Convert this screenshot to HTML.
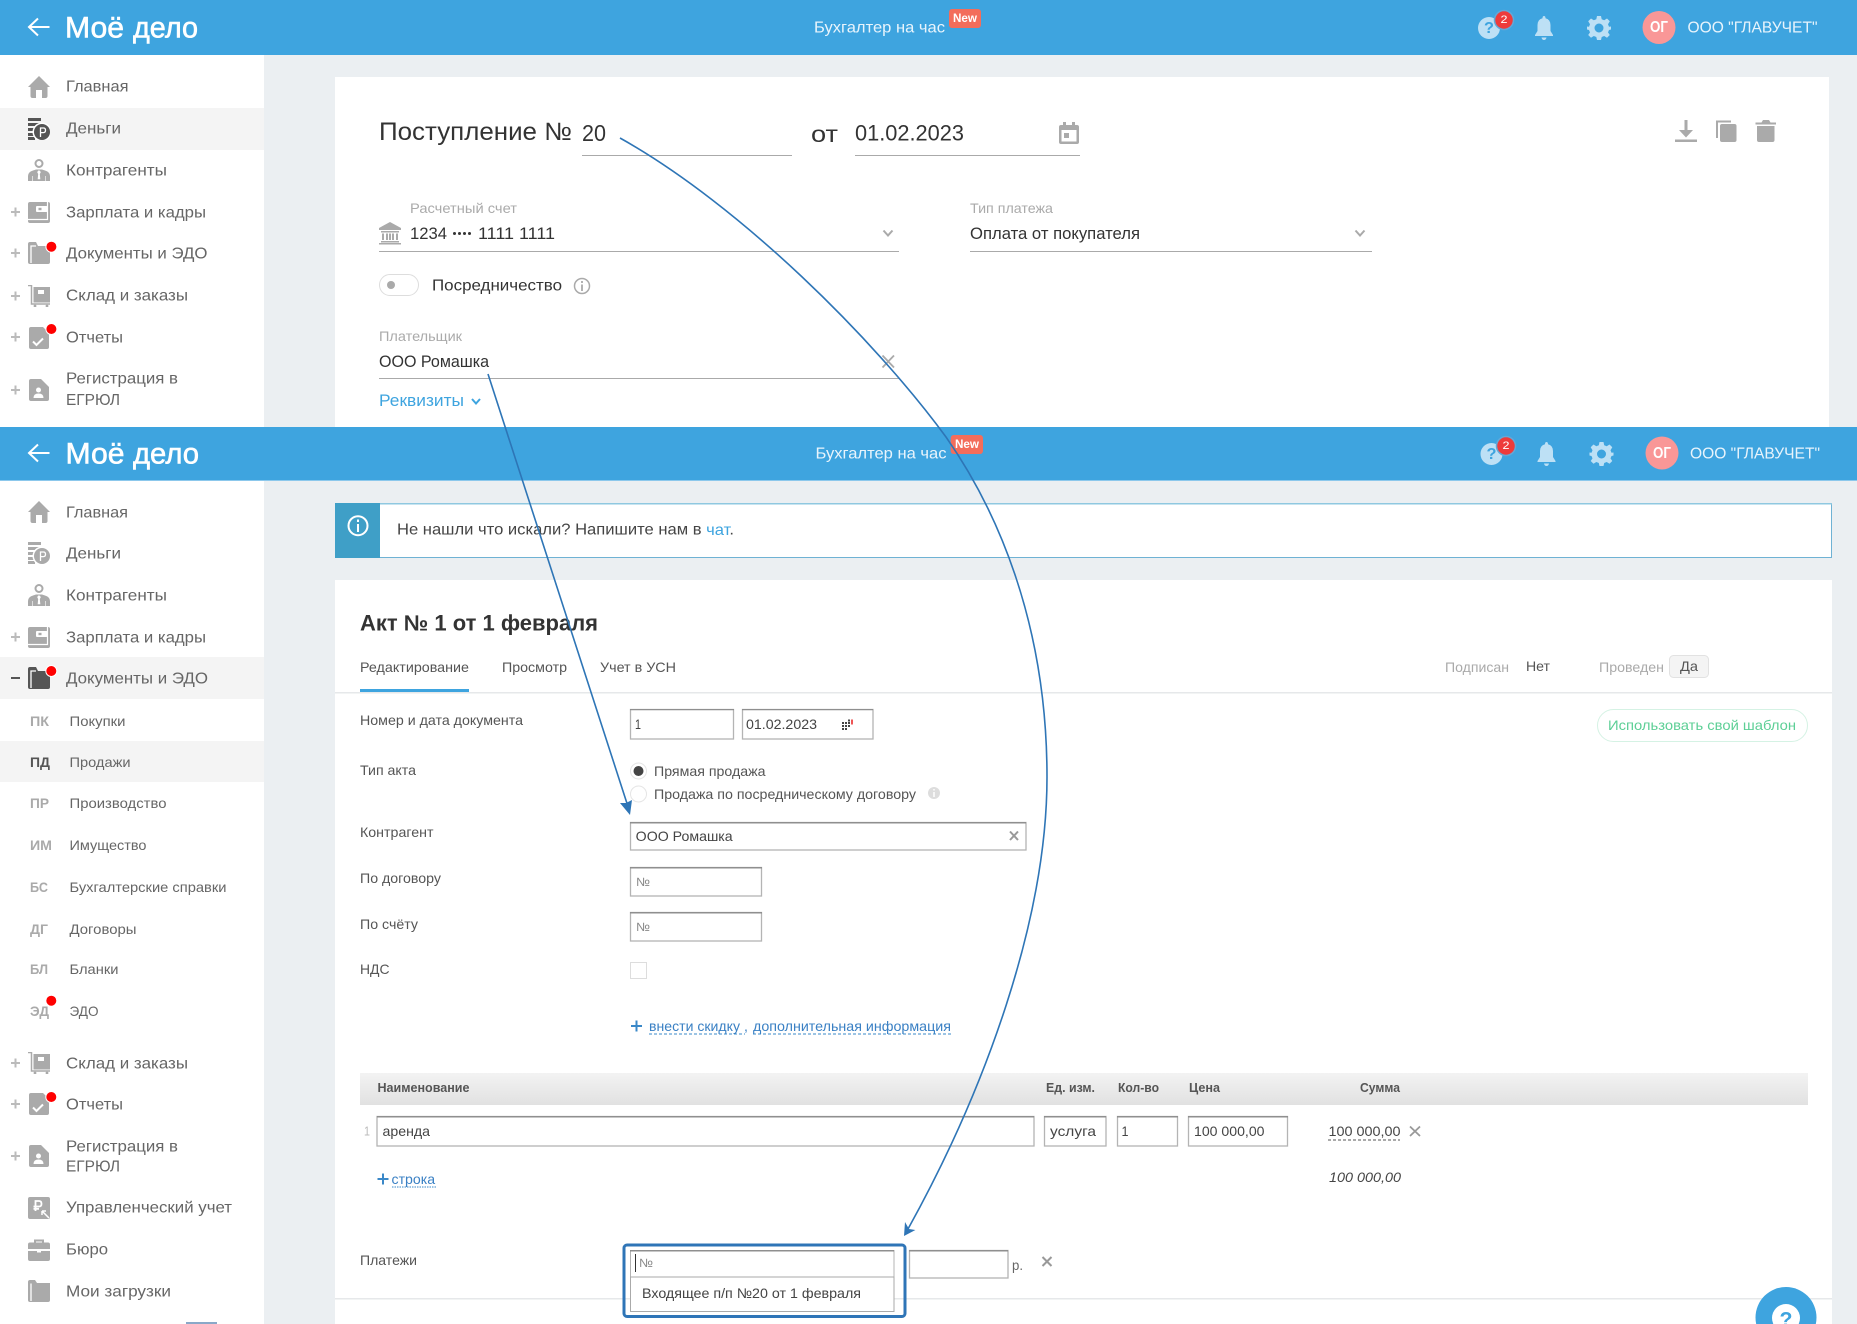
<!DOCTYPE html>
<html lang="ru"><head><meta charset="utf-8"><title>Моё дело</title>
<style>
html,body{margin:0;padding:0;width:1857px;height:1324px;overflow:hidden;background:#ebeff2}
svg{display:block}
text{font-family:"Liberation Sans","Noto Sans CJK SC",sans-serif;dominant-baseline:central;white-space:pre}
.s{font-size:16px;fill:#666}
.u{font-size:14px;fill:#666}
.a{font-size:14px;font-weight:bold;fill:#aaa}
.h{font-size:16px;fill:#e8f4fc}
.l{font-size:14px;fill:#aaa}
.v{font-size:16.5px;fill:#333}
.f{font-size:14px;fill:#555}
.th{font-size:12.5px;font-weight:bold;fill:#555}
.lg{font-size:30px;fill:#fff;stroke:#fff;stroke-width:.6px}
</style></head><body>
<svg xmlns="http://www.w3.org/2000/svg" width="1857" height="1324" viewBox="0 0 1857 1324">
<defs>
<symbol id="home" viewBox="0 0 22 22" width="22" height="22"><path d="M11 0L22 11H19.5V20Q19.5 22 17.5 22H14V14H8V22H4.500Q2.500 22 2.500 20V11H0Z"/></symbol>
<symbol id="money" viewBox="0 0 22 22" width="22" height="22"><path d="M0 0H13V3H0ZM0 5H12V8H0ZM0 10H7V13H0ZM0 15H6V18H0ZM0 19H7V22H0Z"/><circle cx="14" cy="14" r="9.500" fill="#fff"/><circle cx="14" cy="14" r="8"/><path d="M12.500 19V10H15.500Q17.500 10 17.500 12.300T15.500 14.600H12.500" fill="none" stroke="#fff" stroke-width="1.300"/></symbol>
<symbol id="person" viewBox="0 0 22 22" width="22" height="22"><circle cx="11" cy="4.500" r="3.500" fill="none" stroke="currentColor" stroke-width="2"/><path d="M0 22V17Q0 13 5 11.500L8 10.500H14L17 11.500Q22 13 22 17V22Z"/><path d="M11 11.500L9.500 13L10.500 15L10 20H12L11.500 15L12.500 13ZM4.500 17V22M17.500 17V22" fill="#fff" stroke="#fff" stroke-width=".6"/></symbol>
<symbol id="wallet" viewBox="0 0 22 22" width="22" height="22"><rect y="1" width="22" height="21" rx="2"/><path d="M19.500 1V18.500H0" fill="none" stroke="#fff" stroke-width="1.200"/><rect x="8" y="5" width="11.500" height="6" rx="1" fill="#fff"/><rect x="10.500" y="6.800" width="3" height="2.400"/></symbol>
<symbol id="folder" viewBox="0 0 22 22" width="22" height="22"><path d="M0 2Q0 0 2 0H8L10 4H22V20Q22 22 20 22H2Q0 22 0 20Z"/><path d="M3 21V4H8" fill="none" stroke="#fff" stroke-width="1.300"/></symbol>
<symbol id="cart" viewBox="0 0 22 22" width="22" height="22"><path d="M0 0.500H3.500V19H22" fill="none" stroke="currentColor" stroke-width="1.500"/><rect x="5.500" y="2" width="16.500" height="15.500"/><rect x="10" y="5" width="6" height="4" fill="#fff"/><circle cx="7" cy="21" r="1.400"/><circle cx="19" cy="21" r="1.400"/></symbol>
<symbol id="report" viewBox="0 0 22 22" width="22" height="22"><path d="M3 0H15L21 6V20Q21 22 19 22H3Q1 22 1 20V2Q1 0 3 0Z"/><path d="M5 14.500L8.500 18L15 11.500" fill="none" stroke="#fff" stroke-width="2"/></symbol>
<symbol id="reg" viewBox="0 0 22 22" width="22" height="22"><path d="M3 0H13L21 8V20Q21 22 19 22H3Q1 22 1 20V2Q1 0 3 0Z"/><circle cx="10.500" cy="11" r="2.500" fill="#fff"/><path d="M5.500 19Q5.500 14.500 10.500 14.500T15.500 19Z" fill="#fff"/></symbol>
<symbol id="manage" viewBox="0 0 22 22" width="22" height="22"><rect width="22" height="22" rx="2"/><path d="M7.500 14V4H11Q13.500 4 13.500 6.800T11 9.500H5.500M5.500 11.800H11" fill="none" stroke="#fff" stroke-width="1.800"/><path d="M21 21L14 14M14 14V18M14 14H18" fill="none" stroke="#fff" stroke-width="1.500"/></symbol>
<symbol id="case" viewBox="0 0 22 22" width="22" height="22"><path d="M7 4V1.500H15V4" fill="none" stroke="currentColor" stroke-width="2"/><path d="M0 5.500Q0 3.500 2 3.500H20Q22 3.500 22 5.500V10H0ZM0 12H22V20Q22 22 20 22H2Q0 22 0 20Z"/><rect x="9" y="10" width="4" height="3.500" fill="#fff"/></symbol>
<symbol id="folder2" viewBox="0 0 22 22" width="22" height="22"><path d="M0 2Q0 0 2 0H7L9 3H22V20Q22 22 20 22H2Q0 22 0 20Z"/><path d="M3 21V3.500" fill="none" stroke="#fff" stroke-width="1.300"/></symbol>
<symbol id="gear" viewBox="0 0 24 24" width="24" height="24"><path d="M10 0H14L14.700 3.300L17.200 4.300L20 2.500L22.800 5.300L21 8.200L22 10.700L24 10.500V13.500L22 14L21 16.400L22.800 19L20 21.800L17.200 20L14.700 21L14 24H10L9.300 21L6.800 20L4 21.800L1.200 19L3 16.400L2 14L0 13.500V10.500L2 10.700L3 8.200L1.200 5.300L4 2.500L6.800 4.300L9.300 3.300ZM12 7.500A4.500 4.500 0 1 0 12 16.500A4.500 4.500 0 1 0 12 7.500Z" fill-rule="evenodd"/></symbol>
<symbol id="bell" viewBox="0 0 20 24" width="20" height="24"><path d="M10 0Q11.500 0 11.500 2.200Q16.500 3.500 16.500 9V15L19 19V20H1V19L3.500 15V9Q3.500 3.500 8.500 2.200Q8.500 0 10 0ZM7.500 21.500H12.500Q12 24 10 24T7.500 21.500Z"/></symbol>
<linearGradient id="thg" x1="0" y1="0" x2="0" y2="1"><stop offset="0" stop-color="#f3f3f3"/><stop offset="1" stop-color="#e1e1e1"/></linearGradient>
</defs>

<rect width="1857" height="1324" fill="#ebeff2"/>
<rect x="0" y="55" width="264" height="1269" fill="#fff"/>

<!-- top sidebar -->
<rect x="0" y="108" width="264" height="42" fill="#f4f4f4"/>
<g fill="#aaa" color="#aaa">
<use href="#home" x="28" y="76"/>
<use href="#money" x="28" y="118" fill="#555" color="#555"/>
<use href="#person" x="28" y="159"/>
<use href="#wallet" x="28" y="201"/>
<use href="#folder" x="28" y="242"/>
<use href="#cart" x="28" y="285"/>
<use href="#report" x="28" y="327"/>
<use href="#reg" x="28" y="379"/>
</g>
<g stroke="#bbb" stroke-width="2" fill="none"><path d="M11 212H20M15.500 207.500V216.500M11 253H20M15.500 248.500V257.500M11 296H20M15.500 291.500V300.500M11 337H20M15.500 332.500V341.500M11 390H20M15.500 385.500V394.500"/></g>
<g fill="#f00" stroke="#fff" stroke-width="1"><circle cx="51.400" cy="246.700" r="5.500"/><circle cx="51.400" cy="329" r="5.500"/></g>
<text class="s" x="66" y="87" textLength="62.500" lengthAdjust="spacingAndGlyphs">Главная</text>
<text class="s" x="66" y="129" textLength="55" lengthAdjust="spacingAndGlyphs">Деньги</text>
<text class="s" x="66" y="171" textLength="101" lengthAdjust="spacingAndGlyphs">Контрагенты</text>
<text class="s" x="66" y="213" textLength="140" lengthAdjust="spacingAndGlyphs">Зарплата и кадры</text>
<text class="s" x="66" y="254" textLength="141.500" lengthAdjust="spacingAndGlyphs">Документы и ЭДО</text>
<text class="s" x="66" y="296" textLength="122" lengthAdjust="spacingAndGlyphs">Склад и заказы</text>
<text class="s" x="66" y="338" textLength="57" lengthAdjust="spacingAndGlyphs">Отчеты</text>
<text class="s" x="66" y="379" textLength="112" lengthAdjust="spacingAndGlyphs">Регистрация в</text>
<text class="s" x="66" y="400.500" textLength="54" lengthAdjust="spacingAndGlyphs">ЕГРЮЛ</text>

<!-- top card -->
<rect x="335" y="77" width="1494" height="350" fill="#fff"/>
<text x="379" y="132" font-size="25" fill="#333" textLength="193" lengthAdjust="spacingAndGlyphs">Поступление №</text>
<text x="582" y="133" font-size="23" fill="#333" textLength="24" lengthAdjust="spacingAndGlyphs">20</text>
<rect x="582" y="155" width="210" height="1" fill="#aaa"/>
<text x="811" y="134" font-size="23" fill="#333" textLength="27" lengthAdjust="spacingAndGlyphs">от</text>
<text x="855" y="133" font-size="22" fill="#333" textLength="109" lengthAdjust="spacingAndGlyphs">01.02.2023</text>
<rect x="855" y="155" width="225" height="1" fill="#aaa"/>
<path d="M1059 127Q1059 125 1061 125H1063V122H1066V125H1072V122H1075V125H1077Q1079 125 1079 127V142Q1079 144 1077 144H1061Q1059 144 1059 142ZM1061.500 130V141.500H1076.500V130ZM1064 133H1069V138H1064Z" fill="#aaa" fill-rule="evenodd"/>
<g fill="#aaa">
<path d="M1684.500 120H1687.500V130H1693L1686 137.500L1679 130H1684.500ZM1675 139.500H1697V142H1675Z"/>
<path d="M1716 138V120.500H1731V122.500H1718V138Z"/><rect x="1720" y="124" width="16.500" height="18" rx="2"/>
<path d="M1755.500 122.500H1761.500L1763 120H1769L1770.500 122.500H1776V124.500H1755.500ZM1757 126H1774.500V140Q1774.500 142 1772.500 142H1759Q1757 142 1757 140Z"/>
</g>
<text class="l" x="410" y="208" textLength="107" lengthAdjust="spacingAndGlyphs">Расчетный счет</text>
<path d="M390 222L401 228V230H379V228ZM381 231H399V232.500H381ZM382 233.500H384V240H382ZM386 233.500H388V240H386ZM392 233.500H394V240H392ZM396 233.500H398V240H396ZM389 233.500H391V240H389ZM381 241H399V242.500H381ZM379 243H401V244.500H379Z" fill="#aaa"/>
<text class="v" x="410" y="234" textLength="37" lengthAdjust="spacingAndGlyphs">1234</text>
<g fill="#333"><circle cx="454.500" cy="233.500" r="1.500"/><circle cx="459.500" cy="233.500" r="1.500"/><circle cx="464.500" cy="233.500" r="1.500"/><circle cx="469.500" cy="233.500" r="1.500"/></g>
<text class="v" x="478" y="234" textLength="77" lengthAdjust="spacingAndGlyphs">1111 1111</text>
<rect x="379" y="251" width="520" height="1" fill="#aaa"/>
<path d="M883.500 230.500L888 235.500L892.500 230.500" fill="none" stroke="#aaa" stroke-width="2"/>
<text class="l" x="970" y="208" textLength="83" lengthAdjust="spacingAndGlyphs">Тип платежа</text>
<text class="v" x="970" y="234" textLength="170" lengthAdjust="spacingAndGlyphs">Оплата от покупателя</text>
<rect x="970" y="251" width="402" height="1" fill="#aaa"/>
<path d="M1355.500 230.500L1360 235.500L1364.500 230.500" fill="none" stroke="#aaa" stroke-width="2"/>
<rect x="379.500" y="274.500" width="39" height="21" rx="10.500" fill="#fff" stroke="#ddd"/>
<circle cx="391" cy="285" r="4" fill="#aaa"/>
<text class="s" x="432" y="286" textLength="130" lengthAdjust="spacingAndGlyphs" style="fill:#333">Посредничество</text>
<circle cx="582" cy="286" r="7.500" fill="none" stroke="#aaa" stroke-width="1.500"/>
<path d="M582 284.500V291M582 281V283" stroke="#aaa" stroke-width="1.800"/>
<text class="l" x="379" y="336" textLength="83" lengthAdjust="spacingAndGlyphs">Плательщик</text>
<text class="v" x="379" y="362" textLength="110" lengthAdjust="spacingAndGlyphs">ООО Ромашка</text>
<rect x="379" y="378" width="520" height="1" fill="#aaa"/>
<path d="M882.500 355.500L894 367.500M894 355.500L882.500 367.500" stroke="#aaa" stroke-width="1.800"/>
<text class="v" x="379" y="401" textLength="85" lengthAdjust="spacingAndGlyphs" style="fill:#3ea4df">Реквизиты</text>
<path d="M472 399L476 403.500L480 399" fill="none" stroke="#3ea4df" stroke-width="2"/>

<!-- header 1 -->
<rect x="0" y="0" width="1857" height="55" fill="#3ea4df"/>
<path d="M49.500 27H29.500M38 18.500L29 27L38 35.500" fill="none" stroke="#fff" stroke-width="2"/>
<text class="lg" x="65" y="28" textLength="59" lengthAdjust="spacingAndGlyphs">Моё</text>
<text class="lg" x="133" y="28" textLength="65" lengthAdjust="spacingAndGlyphs">дело</text>
<text class="h" x="814" y="28" textLength="131" lengthAdjust="spacingAndGlyphs">Бухгалтер на час</text>
<rect x="949" y="9" width="32" height="19" rx="3" fill="#f36d5b"/>
<text x="953" y="18" font-size="12" font-weight="bold" fill="#fff" textLength="24" lengthAdjust="spacingAndGlyphs">New</text>
<circle cx="1489" cy="28" r="11" fill="#bde0f5"/>
<text x="1484" y="28.500" font-size="16" font-weight="bold" fill="#3ea4df" textLength="10" lengthAdjust="spacingAndGlyphs">?</text>
<circle cx="1504" cy="20" r="9.500" fill="#ee3b3b" stroke="#62a8d8" stroke-width="1.500"/>
<text x="1500.500" y="20" font-size="11" fill="#fff" textLength="7" lengthAdjust="spacingAndGlyphs">2</text>
<use href="#bell" x="1534" y="16" fill="#bde0f5"/>
<use href="#gear" x="1587" y="16" fill="#bde0f5"/>
<circle cx="1659" cy="27.500" r="16.500" fill="#f99797"/>
<text x="1650" y="27.500" font-size="16" font-weight="bold" fill="#fff" textLength="18" lengthAdjust="spacingAndGlyphs">ОГ</text>
<text class="h" x="1687.500" y="28" textLength="130" lengthAdjust="spacingAndGlyphs">ООО "ГЛАВУЧЕТ"</text>

<!-- header 2 -->
<rect x="0" y="427" width="1857" height="53" fill="#3ea4df"/>
<rect x="0" y="480" width="1857" height="1" fill="#8cc8ec"/>
<path d="M49.500 453H29.500M38 444.500L29 453L38 461.500" fill="none" stroke="#fff" stroke-width="2"/>
<text class="lg" x="65.500" y="454" textLength="59" lengthAdjust="spacingAndGlyphs">Моё</text>
<text class="lg" x="133" y="454" textLength="66" lengthAdjust="spacingAndGlyphs">дело</text>
<text class="h" x="815.500" y="454" textLength="131" lengthAdjust="spacingAndGlyphs">Бухгалтер на час</text>
<rect x="950.700" y="435" width="32.300" height="19" rx="3" fill="#f36d5b"/>
<text x="955" y="444" font-size="12" font-weight="bold" fill="#fff" textLength="24" lengthAdjust="spacingAndGlyphs">New</text>
<circle cx="1491.500" cy="454" r="11" fill="#bde0f5"/>
<text x="1486.500" y="454.500" font-size="16" font-weight="bold" fill="#3ea4df" textLength="10" lengthAdjust="spacingAndGlyphs">?</text>
<circle cx="1506" cy="446" r="9.500" fill="#ee3b3b" stroke="#62a8d8" stroke-width="1.500"/>
<text x="1502.500" y="446" font-size="11" fill="#fff" textLength="7" lengthAdjust="spacingAndGlyphs">2</text>
<use href="#bell" x="1536.500" y="442" fill="#bde0f5"/>
<use href="#gear" x="1589.500" y="442" fill="#bde0f5"/>
<circle cx="1662" cy="453" r="16.500" fill="#f99797"/>
<text x="1653" y="453.500" font-size="16" font-weight="bold" fill="#fff" textLength="18" lengthAdjust="spacingAndGlyphs">ОГ</text>
<text class="h" x="1690" y="454" textLength="130" lengthAdjust="spacingAndGlyphs">ООО "ГЛАВУЧЕТ"</text>

<!-- sidebar 2 -->
<rect x="0" y="657" width="264" height="42" fill="#f4f4f4"/>
<rect x="0" y="741" width="264" height="41" fill="#f4f4f4"/>
<g fill="#aaa" color="#aaa">
<use href="#home" x="28" y="501"/>
<use href="#money" x="28" y="542"/>
<use href="#person" x="28" y="584"/>
<use href="#wallet" x="28" y="626"/>
<use href="#folder" x="28" y="667" fill="#555" color="#555"/>
<use href="#cart" x="28" y="1052"/>
<use href="#report" x="28" y="1093"/>
<use href="#reg" x="28" y="1145"/>
<use href="#manage" x="28" y="1197"/>
<use href="#case" x="28" y="1239"/>
<use href="#folder2" x="28" y="1280"/>
</g>
<g stroke="#bbb" stroke-width="2" fill="none"><path d="M11 637H20M15.500 632.500V641.500M11 1063H20M15.500 1058.500V1067.500M11 1104H20M15.500 1099.500V1108.500M11 1156H20M15.500 1151.500V1160.500"/></g>
<path d="M11 678H20" stroke="#555" stroke-width="2"/>
<g fill="#f00" stroke="#fff" stroke-width="1"><circle cx="51.300" cy="671" r="5.500"/><circle cx="51.300" cy="1000.700" r="5.500"/><circle cx="51.300" cy="1097" r="5.500"/></g>
<text class="s" x="66" y="513" textLength="62" lengthAdjust="spacingAndGlyphs">Главная</text>
<text class="s" x="66" y="554" textLength="55" lengthAdjust="spacingAndGlyphs">Деньги</text>
<text class="s" x="66" y="596" textLength="101" lengthAdjust="spacingAndGlyphs">Контрагенты</text>
<text class="s" x="66" y="638" textLength="140" lengthAdjust="spacingAndGlyphs">Зарплата и кадры</text>
<text class="s" x="66" y="679" textLength="142" lengthAdjust="spacingAndGlyphs">Документы и ЭДО</text>
<text class="a" x="30" y="721" textLength="19" lengthAdjust="spacingAndGlyphs">ПК</text><text class="u" x="69.500" y="721" textLength="56" lengthAdjust="spacingAndGlyphs">Покупки</text>
<text class="a" x="30" y="762" textLength="20" lengthAdjust="spacingAndGlyphs" style="fill:#555">ПД</text><text class="u" x="69.500" y="762" textLength="61" lengthAdjust="spacingAndGlyphs">Продажи</text>
<text class="a" x="30" y="803" textLength="19" lengthAdjust="spacingAndGlyphs">ПР</text><text class="u" x="69.500" y="803" textLength="97" lengthAdjust="spacingAndGlyphs">Производство</text>
<text class="a" x="30" y="845" textLength="22" lengthAdjust="spacingAndGlyphs">ИМ</text><text class="u" x="69.500" y="845" textLength="77" lengthAdjust="spacingAndGlyphs">Имущество</text>
<text class="a" x="30" y="887" textLength="18" lengthAdjust="spacingAndGlyphs">БС</text><text class="u" x="69.500" y="887" textLength="157" lengthAdjust="spacingAndGlyphs">Бухгалтерские справки</text>
<text class="a" x="30" y="929" textLength="18" lengthAdjust="spacingAndGlyphs">ДГ</text><text class="u" x="69.500" y="929" textLength="67" lengthAdjust="spacingAndGlyphs">Договоры</text>
<text class="a" x="30" y="969" textLength="18" lengthAdjust="spacingAndGlyphs">БЛ</text><text class="u" x="69.500" y="969" textLength="49" lengthAdjust="spacingAndGlyphs">Бланки</text>
<text class="a" x="30" y="1011" textLength="19" lengthAdjust="spacingAndGlyphs">ЭД</text><text class="u" x="69.500" y="1011" textLength="29" lengthAdjust="spacingAndGlyphs">ЭДО</text>
<text class="s" x="66" y="1064" textLength="122" lengthAdjust="spacingAndGlyphs">Склад и заказы</text>
<text class="s" x="66" y="1105" textLength="57" lengthAdjust="spacingAndGlyphs">Отчеты</text>
<text class="s" x="66" y="1147" textLength="112" lengthAdjust="spacingAndGlyphs">Регистрация в</text>
<text class="s" x="66" y="1167" textLength="54" lengthAdjust="spacingAndGlyphs">ЕГРЮЛ</text>
<text class="s" x="66" y="1208" textLength="166" lengthAdjust="spacingAndGlyphs">Управленческий учет</text>
<text class="s" x="66" y="1250" textLength="42" lengthAdjust="spacingAndGlyphs">Бюро</text>
<text class="s" x="66" y="1292" textLength="105" lengthAdjust="spacingAndGlyphs">Мои загрузки</text>
<rect x="186" y="1322" width="31" height="2" fill="#8aa8c8"/>

<!-- notice -->
<rect x="335.500" y="503.500" width="1496" height="54" fill="#fff" stroke="#6fb2d4"/>
<rect x="335" y="503" width="1497" height="1.500" fill="#8fc8e0"/>
<rect x="335" y="503" width="45" height="55" fill="#3f9fc7"/>
<circle cx="358" cy="525.700" r="9.500" fill="none" stroke="#fff" stroke-width="2"/>
<path d="M358 524V532M358 519.500V522" stroke="#fff" stroke-width="2"/>
<text x="397" y="530" font-size="16" fill="#444" textLength="337" lengthAdjust="spacingAndGlyphs">Не нашли что искали? Напишите нам в <tspan fill="#3ea4df">чат</tspan>.</text>

<!-- main card -->
<rect x="335" y="580" width="1497" height="744" fill="#fff"/>
<text x="360" y="623" font-size="22" font-weight="bold" fill="#333" textLength="238" lengthAdjust="spacingAndGlyphs">Акт № 1 от 1 февраля</text>
<text class="f" x="360" y="667" textLength="109" lengthAdjust="spacingAndGlyphs">Редактирование</text>
<text class="f" x="502" y="667" textLength="65" lengthAdjust="spacingAndGlyphs">Просмотр</text>
<text class="f" x="600" y="667" textLength="76" lengthAdjust="spacingAndGlyphs">Учет в УСН</text>
<rect x="335" y="692" width="1497" height="1.500" fill="#e6e8ea"/>
<rect x="360" y="689" width="109" height="3" fill="#3ea4df"/>
<text class="l" x="1445" y="667" textLength="64" lengthAdjust="spacingAndGlyphs">Подписан</text>
<text class="f" x="1526" y="666" textLength="24" lengthAdjust="spacingAndGlyphs">Нет</text>
<text class="l" x="1599" y="667" textLength="65" lengthAdjust="spacingAndGlyphs">Проведен</text>
<rect x="1669.500" y="655.500" width="39" height="22" rx="4" fill="#f4f4f4" stroke="#e2e2e2"/>
<text class="f" x="1680" y="666" textLength="18" lengthAdjust="spacingAndGlyphs">Да</text>
<rect x="1597.500" y="709.500" width="210" height="32" rx="16" fill="#fff" stroke="#d5f2e4"/>
<text x="1608" y="725" font-size="14" fill="#5dcf96" textLength="188" lengthAdjust="spacingAndGlyphs">Использовать свой шаблон</text>

<text class="f" x="360" y="720" textLength="163" lengthAdjust="spacingAndGlyphs">Номер и дата документа</text>
<text class="f" x="360" y="770" textLength="56" lengthAdjust="spacingAndGlyphs">Тип акта</text>
<text class="f" x="360" y="832" textLength="73.500" lengthAdjust="spacingAndGlyphs">Контрагент</text>
<text class="f" x="360" y="878" textLength="81" lengthAdjust="spacingAndGlyphs">По договору</text>
<text class="f" x="360" y="924" textLength="58" lengthAdjust="spacingAndGlyphs">По счёту</text>
<text class="f" x="360" y="969" textLength="29.500" lengthAdjust="spacingAndGlyphs">НДС</text>

<g fill="#fff" stroke="#b4b4b4" stroke-width="1.300">
<rect x="630.500" y="709.500" width="103" height="29.500"/>
<rect x="742.500" y="709.500" width="130.500" height="29.500"/>
<rect x="630.500" y="822.500" width="395.500" height="27.500"/>
<rect x="630.500" y="867.500" width="131" height="28.500"/>
<rect x="630.500" y="912.500" width="131" height="28.500"/>
<rect x="377" y="1116.500" width="657" height="29.500"/>
<rect x="1044.500" y="1116.500" width="61.500" height="29.500"/>
<rect x="1117.500" y="1116.500" width="60" height="29.500"/>
<rect x="1188.500" y="1116.500" width="99" height="29.500"/>
<rect x="909.500" y="1250.500" width="98.500" height="27.500"/>
</g>
<g fill="#8f8f8f">
<rect x="630" y="709" width="104" height="1.200"/><rect x="742" y="709" width="131" height="1.200"/>
<rect x="630" y="822" width="396" height="1.500"/><rect x="630" y="867" width="132" height="1.500"/>
<rect x="630" y="912" width="132" height="1.500"/><rect x="377" y="1116" width="657" height="1.500"/>
<rect x="1044" y="1116" width="62" height="1.500"/><rect x="1117" y="1116" width="61" height="1.500"/>
<rect x="1188" y="1116" width="100" height="1.500"/><rect x="909" y="1250" width="99" height="1.500"/>
</g>
<text class="f" x="635" y="724" textLength="6" lengthAdjust="spacingAndGlyphs" style="fill:#444">1</text>
<text class="f" x="746" y="724" textLength="71" lengthAdjust="spacingAndGlyphs" style="fill:#444">01.02.2023</text>
<g fill="#444"><rect x="842" y="722" width="2" height="2"/><rect x="845" y="722" width="2" height="2"/><rect x="848" y="719.500" width="2" height="2"/><rect x="848" y="722" width="2" height="2"/><rect x="842" y="725" width="2" height="2"/><rect x="845" y="725" width="2" height="2"/><rect x="848" y="725" width="2" height="2"/><rect x="842" y="728" width="2" height="2"/><rect x="845" y="728" width="2" height="2"/></g>
<rect x="851" y="719.500" width="2" height="5" fill="#e55"/>

<circle cx="638.500" cy="771" r="8" fill="#fff" stroke="#e5e5e5"/><circle cx="638.500" cy="771" r="5" fill="#444"/>
<circle cx="638.500" cy="794" r="8" fill="#fff" stroke="#e5e5e5"/>
<text class="f" x="654" y="771" textLength="111.500" lengthAdjust="spacingAndGlyphs">Прямая продажа</text>
<text class="f" x="654" y="794" textLength="262" lengthAdjust="spacingAndGlyphs">Продажа по посредническому договору</text>
<circle cx="934" cy="793" r="6" fill="#ddd"/><path d="M934 792V797M934 789V790.500" stroke="#fff" stroke-width="1.500"/>
<text class="f" x="635.700" y="836" textLength="97" lengthAdjust="spacingAndGlyphs" style="fill:#444">ООО Ромашка</text>
<path d="M1010 831.500L1018 840M1018 831.500L1010 840" stroke="#999" stroke-width="2"/>
<text x="636" y="882" font-size="12" fill="#888" textLength="14" lengthAdjust="spacingAndGlyphs">№</text>
<text x="636" y="927" font-size="12" fill="#888" textLength="14" lengthAdjust="spacingAndGlyphs">№</text>
<rect x="630.500" y="962.500" width="16" height="16" fill="#fff" stroke="#ddd"/>

<path d="M631 1026H642M636.500 1020.500V1031.500" stroke="#3a88c8" stroke-width="2"/>
<text x="649" y="1026" font-size="14" fill="#3a80c4" textLength="91" lengthAdjust="spacingAndGlyphs">внести скидку</text>
<text x="744" y="1026" font-size="14" fill="#3a80c4">,</text>
<text x="753" y="1026" font-size="14" fill="#3a80c4" textLength="198" lengthAdjust="spacingAndGlyphs">дополнительная информация</text>
<path d="M649 1034H745M753 1034H951" stroke="#3a88c8" stroke-dasharray="3 2"/>

<rect x="360" y="1073" width="1448" height="32" fill="url(#thg)"/>
<text class="th" x="377.500" y="1088" textLength="92" lengthAdjust="spacingAndGlyphs">Наименование</text>
<text class="th" x="1046" y="1088" textLength="49" lengthAdjust="spacingAndGlyphs">Ед. изм.</text>
<text class="th" x="1118" y="1088" textLength="41" lengthAdjust="spacingAndGlyphs">Кол-во</text>
<text class="th" x="1189" y="1088" textLength="31" lengthAdjust="spacingAndGlyphs">Цена</text>
<text class="th" x="1360" y="1088" textLength="40" lengthAdjust="spacingAndGlyphs">Сумма</text>

<text x="364" y="1131" font-size="13" fill="#bbb" textLength="6" lengthAdjust="spacingAndGlyphs">1</text>
<text class="f" x="382.500" y="1131" textLength="47.500" lengthAdjust="spacingAndGlyphs" style="fill:#444">аренда</text>
<text class="f" x="1050" y="1131" textLength="46" lengthAdjust="spacingAndGlyphs" style="fill:#444">услуга</text>
<text class="f" x="1121.500" y="1131" textLength="7" lengthAdjust="spacingAndGlyphs" style="fill:#444">1</text>
<text class="f" x="1194" y="1131" textLength="70.500" lengthAdjust="spacingAndGlyphs" style="fill:#444">100 000,00</text>
<text class="f" x="1328.500" y="1131" textLength="72" lengthAdjust="spacingAndGlyphs" style="fill:#444">100 000,00</text>
<path d="M1328 1140H1400" stroke="#555" stroke-dasharray="3 2"/>
<path d="M1410 1126.500L1420 1136M1420 1126.500L1410 1136" stroke="#999" stroke-width="1.800"/>
<text x="1329" y="1177" font-size="14" font-style="italic" fill="#444" textLength="72" lengthAdjust="spacingAndGlyphs">100 000,00</text>
<path d="M377.500 1179H388.500M383 1173.500V1184.500" stroke="#3a88c8" stroke-width="2"/>
<text x="391.500" y="1179" font-size="14" fill="#3a80c4" textLength="43.600" lengthAdjust="spacingAndGlyphs">строка</text>
<path d="M392 1187H436" stroke="#3a88c8" stroke-dasharray="1.500 1"/>

<rect x="335" y="1298" width="1497" height="1.500" fill="#e6e8ea"/>
<text class="f" x="360" y="1260" textLength="57" lengthAdjust="spacingAndGlyphs">Платежи</text>
<rect x="630.500" y="1250.500" width="263.500" height="26.500" fill="#fff" stroke="#b4b4b4"/>
<rect x="630" y="1250" width="264" height="1.500" fill="#8f8f8f"/>
<rect x="630.500" y="1277" width="263.500" height="34.500" fill="#fff" stroke="#aaa"/>
<rect x="635" y="1254" width="1" height="18" fill="#333"/>
<text x="639" y="1263" font-size="12" fill="#888" textLength="14" lengthAdjust="spacingAndGlyphs">№</text>
<text class="f" x="642" y="1293" textLength="219" lengthAdjust="spacingAndGlyphs" style="fill:#444">Входящее п/п №20 от 1 февраля</text>
<text class="f" x="1012" y="1265" textLength="11" lengthAdjust="spacingAndGlyphs" style="fill:#666">р.</text>
<path d="M1042.500 1257L1051.500 1266M1051.500 1257L1042.500 1266" stroke="#999" stroke-width="2"/>

<circle cx="1786" cy="1317.500" r="30.500" fill="#3ea4df"/>
<circle cx="1786" cy="1318" r="14" fill="#fff"/>
<text x="1779.500" y="1320" font-size="21" font-weight="bold" fill="#3ea4df" textLength="13" lengthAdjust="spacingAndGlyphs">?</text>

<!-- annotations -->
<rect x="624" y="1245" width="281" height="71.500" rx="3" fill="none" stroke="#2f75b7" stroke-width="3"/>
<path d="M488 374L627.500 805" stroke="#2e75b6" stroke-width="1.600" fill="none"/>
<path d="M630 815L620 803L626 803L632 800Z" fill="#2e75b6"/>
<path d="M620 138C740 205 875 340 946 437C995 507 1047 620 1047 777C1047 920 985 1090 908 1229" stroke="#2e75b6" stroke-width="1.600" fill="none"/>
<path d="M904 1236L905 1222L909 1229L915.400 1230Z" fill="#2e75b6"/>
</svg>
</body></html>
